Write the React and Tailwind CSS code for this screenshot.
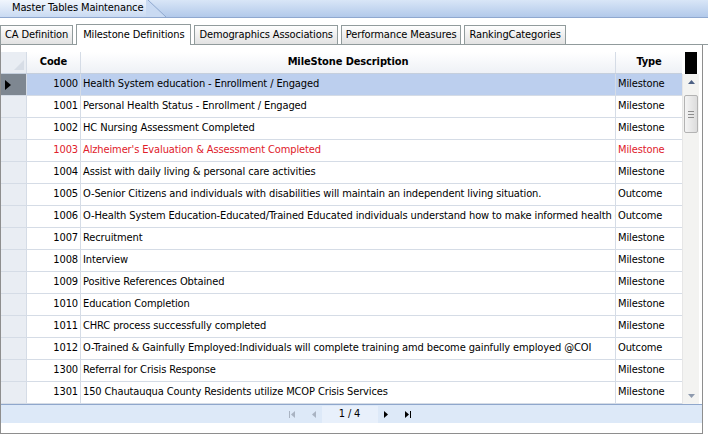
import React from 'react';

const ROWS = [
  { code: '1000', desc: 'Health System education - Enrollment / Engaged', type: 'Milestone' },
  { code: '1001', desc: 'Personal Health Status - Enrollment / Engaged', type: 'Milestone' },
  { code: '1002', desc: 'HC Nursing Assessment Completed', type: 'Milestone' },
  { code: '1003', desc: "Alzheimer's Evaluation & Assessment Completed", type: 'Milestone', red: true },
  { code: '1004', desc: 'Assist with daily living & personal care activities', type: 'Milestone' },
  { code: '1005', desc: 'O-Senior Citizens and individuals with disabilities will maintain an independent living situation.', type: 'Outcome' },
  { code: '1006', desc: 'O-Health System Education-Educated/Trained Educated individuals understand how to make informed health decisions', type: 'Outcome' },
  { code: '1007', desc: 'Recruitment', type: 'Milestone' },
  { code: '1008', desc: 'Interview', type: 'Milestone' },
  { code: '1009', desc: 'Positive References Obtained', type: 'Milestone' },
  { code: '1010', desc: 'Education Completion', type: 'Milestone' },
  { code: '1011', desc: 'CHRC process successfully completed', type: 'Milestone' },
  { code: '1012', desc: 'O-Trained & Gainfully Employed:Individuals will complete training amd become gainfully employed @COI', type: 'Outcome' },
  { code: '1300', desc: 'Referral for Crisis Response', type: 'Milestone' },
  { code: '1301', desc: '150 Chautauqua County Residents utilize MCOP Crisis Services', type: 'Milestone' },
];

const TABS = ['CA Definition', 'Milestone Definitions', 'Demographics Associations', 'Performance Measures', 'RankingCategories'];

function Tab({ label, active }) {
  if (active) {
    return (
      <div className="h-[21px] px-[6px] flex items-center whitespace-nowrap border border-b-0 border-[#919b9c] bg-white relative top-[1px]">
        {label}
      </div>
    );
  }
  return (
    <div className="h-[19px] px-[4px] flex items-center whitespace-nowrap border border-b-0 border-[#919b9c] bg-gradient-to-b from-[#fefefe] to-[#e2e2e2]">
      {label}
    </div>
  );
}

function Arrow({ dir, bar, dim }) {
  const c = dim ? '#a9b3c2' : '#000';
  return (
    <svg width="10" height="9" viewBox="0 0 10 9">
      {dir === 'left' ? (
        <>
          {bar && <rect x="1" y="1" width="1" height="7" fill={c} />}
          <path d="M7 1 L3 4.5 L7 8 Z" fill={c} />
        </>
      ) : (
        <>
          <path d="M3 1 L7 4.5 L3 8 Z" fill={c} />
          {bar && <rect x="8" y="1" width="1" height="7" fill={c} />}
        </>
      )}
    </svg>
  );
}

export default function App() {
  return (
    <div className="w-[708px] h-[436px] bg-white text-[11px] tracking-[-0.12px] text-black overflow-hidden font-['DejaVu_Sans_Condensed','DejaVu_Sans',sans-serif] font-stretch-condensed">
      {/* title strip */}
      <div className="h-[18px] flex bg-gradient-to-b from-[#d9e6f7] to-[#b2c9ea] border-b border-[#8fa8cf]">
        <div className="h-[17px] w-[146px] pl-[12px] flex items-center whitespace-nowrap bg-gradient-to-b from-[#f1f6fd] to-[#c9daf2]">
          Master Tables Maintenance
        </div>
        <div className="h-[17px] w-[20px]">
          <svg width="20" height="17" viewBox="0 0 20 17">
            <polygon points="0,0 2,0 20,17 0,17" fill="#c9daf2" />
            <line x1="2" y1="0" x2="20" y2="17" stroke="#8fa8cf" />
          </svg>
        </div>
      </div>

      {/* tabs */}
      <div className="h-[27px] flex items-end gap-[3px] border-b border-[#919b9c]">
        {TABS.map((t) => (
          <Tab key={t} label={t} active={t === 'Milestone Definitions'} />
        ))}
      </div>

      {/* grid */}
      <div className="w-[703px] h-[389px] border-x border-b border-[#8e8e8e] flex flex-col pt-[7px]">
        <div className="flex flex-1 min-h-0">
          <div className="w-[681px] flex flex-col">
            {/* header */}
            <div className="h-[22px] flex bg-gradient-to-b from-white to-[#eef1f6] border-b border-[#c5cfdd] font-bold">
              <div className="w-[26px] border-r border-[#d5dce6] relative bg-[#e9edf3]">
                <svg className="absolute right-[2px] bottom-[3px]" width="10" height="10" viewBox="0 0 10 10">
                  <polygon points="10,0 10,10 0,10" fill="#d7dde6" />
                </svg>
              </div>
              <div className="w-[54px] flex items-center justify-center border-r border-[#d5dce6]">Code</div>
              <div className="w-[535px] flex items-center justify-center border-r border-[#d5dce6]">MileStone Description</div>
              <div className="w-[66px] flex items-center justify-center">Type</div>
            </div>
            {/* rows */}
            {ROWS.map((r, i) => {
              const sel = i === 0;
              const text = r.red ? 'text-[#e0202a]' : 'text-black';
              return (
                <div key={r.code} className={`h-[22px] flex ${text}`}>
                  <div className={`w-[26px] border-r border-b border-[#d5dce6] flex items-center pl-[4px] ${sel ? 'bg-[#7e8791]' : 'bg-[#e9edf3]'}`}>
                    {sel && (
                      <svg width="6" height="10" viewBox="0 0 6 10">
                        <path d="M0 0 L6 5 L0 10 Z" fill="#000" />
                      </svg>
                    )}
                  </div>
                  <div className={`flex flex-1 border-b border-[#d5dce6] ${sel ? 'bg-[#bccfee]' : 'bg-white'}`}>
                    <div className="w-[54px] flex items-center justify-end pr-[2px] border-r border-[#d5dce6]">{r.code}</div>
                    <div className="w-[535px] flex items-center pl-[2px] border-r border-[#d5dce6] overflow-hidden whitespace-nowrap">{r.desc}</div>
                    <div className="w-[66px] flex items-center pl-[2px] overflow-hidden whitespace-nowrap">{r.type}</div>
                  </div>
                </div>
              );
            })}
          </div>

          {/* scrollbar */}
          <div className="w-[17px] flex flex-col">
            <div className="h-[22px] flex items-center justify-center">
              <div className="w-[12px] h-[22px] bg-black" />
            </div>
            <div className="flex-1 bg-[#f3f3f1] border-l border-[#e6e6e6] flex flex-col items-center">
              <div className="h-[16px] flex items-center justify-center">
                <svg width="7" height="4" viewBox="0 0 7 4"><path d="M0 4 L3.5 0 L7 4 Z" fill="#4d6185" /></svg>
              </div>
              <div className="mt-[5px] w-[14px] h-[38px] rounded-[2px] border border-[#b3b3b3] bg-gradient-to-r from-[#f4f4f4] to-[#dcdcdc] flex flex-col items-center justify-center gap-[2px]">
                <div className="w-[6px] h-px bg-[#8e8e8e]" />
                <div className="w-[6px] h-px bg-[#8e8e8e]" />
                <div className="w-[6px] h-px bg-[#8e8e8e]" />
              </div>
              <div className="flex-1" />
              <div className="h-[16px] flex items-center justify-center">
                <svg width="7" height="4" viewBox="0 0 7 4"><path d="M0 0 L3.5 4 L7 0 Z" fill="#8e9aae" /></svg>
              </div>
            </div>
          </div>
        </div>

        {/* pager */}
        <div className="h-[19px] border-t border-[#8fa7cc] bg-[#dde9f8] flex items-center justify-center pr-[4px]">
          <Arrow dir="left" bar dim />
          <div className="w-[11px]" />
          <Arrow dir="left" dim />
          <div className="w-[3px]" />
          <div className="w-[56px] h-[17px] bg-[#e8f0fb] flex items-center justify-center">1 / 4</div>
          <div className="w-[3px]" />
          <Arrow dir="right" />
          <div className="w-[11px]" />
          <Arrow dir="right" bar />
        </div>
        <div className="h-[10px]" />
      </div>
    </div>
  );
}
